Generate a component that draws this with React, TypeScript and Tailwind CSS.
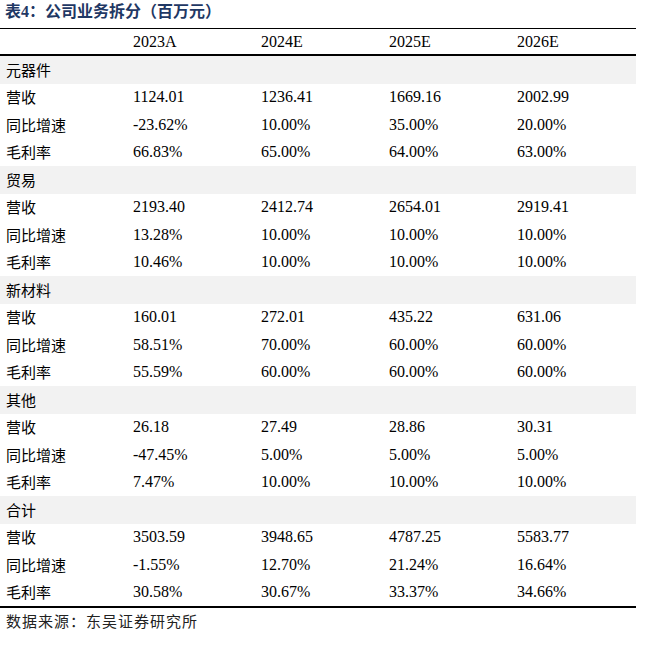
const cols = ['2023A', '2024E', '2025E', '2026E']

const groups = [
  {
    name: '元器件',
    rows: [
      ['营收', '1124.01', '1236.41', '1669.16', '2002.99'],
      ['同比增速', '-23.62%', '10.00%', '35.00%', '20.00%'],
      ['毛利率', '66.83%', '65.00%', '64.00%', '63.00%'],
    ],
  },
  {
    name: '贸易',
    rows: [
      ['营收', '2193.40', '2412.74', '2654.01', '2919.41'],
      ['同比增速', '13.28%', '10.00%', '10.00%', '10.00%'],
      ['毛利率', '10.46%', '10.00%', '10.00%', '10.00%'],
    ],
  },
  {
    name: '新材料',
    rows: [
      ['营收', '160.01', '272.01', '435.22', '631.06'],
      ['同比增速', '58.51%', '70.00%', '60.00%', '60.00%'],
      ['毛利率', '55.59%', '60.00%', '60.00%', '60.00%'],
    ],
  },
  {
    name: '其他',
    rows: [
      ['营收', '26.18', '27.49', '28.86', '30.31'],
      ['同比增速', '-47.45%', '5.00%', '5.00%', '5.00%'],
      ['毛利率', '7.47%', '10.00%', '10.00%', '10.00%'],
    ],
  },
  {
    name: '合计',
    rows: [
      ['营收', '3503.59', '3948.65', '4787.25', '5583.77'],
      ['同比增速', '-1.55%', '12.70%', '21.24%', '16.64%'],
      ['毛利率', '30.58%', '30.67%', '33.37%', '34.66%'],
    ],
  },
]

const grid = 'grid grid-cols-[128px_128px_128px_128px_124px] items-center'
const cjk = "font-['Noto_Sans_CJK_SC',sans-serif]"
const num = "font-['Liberation_Serif','Noto_Sans_CJK_SC',serif]"

export default function App() {
  return (
    <div className="w-[648px] h-[652px] bg-white text-black">
      {/* Title */}
      <div className={`h-[28px] flex items-center pl-[5px] pb-[4px] text-[16px] font-bold text-[#1f3864] ${num}`}>
        <span>表4：公司业务拆分（百万元）</span>
      </div>

      <div className="w-[636px] border-t-[1.5px] border-b-[2px] border-black">
        {/* Header */}
        <div className={`${grid} h-[27px] border-b-[2px] border-black text-[16px] ${num}`}>
          <div />
          {cols.map((c) => (
            <div key={c} className="pl-[5px]">{c}</div>
          ))}
        </div>

        {groups.map((g) => (
          <div key={g.name}>
            <div className={`h-[27.5px] flex items-center pl-[6px] bg-[#f2f2f2] text-[15px] ${cjk}`}>{g.name}</div>
            {g.rows.map((r) => (
              <div key={r[0]} className={`${grid} h-[27.5px] text-[16px]`}>
                <div className={`pl-[6px] text-[15px] ${cjk}`}>{r[0]}</div>
                {r.slice(1).map((v, i) => (
                  <div key={i} className={`pl-[5px] ${num}`}>{v}</div>
                ))}
              </div>
            ))}
          </div>
        ))}
      </div>

      <div className={`pl-[6px] pt-[2px] text-[15px] tracking-[1px] text-[#222] ${cjk}`}>数据来源：东吴证券研究所</div>
    </div>
  )
}
